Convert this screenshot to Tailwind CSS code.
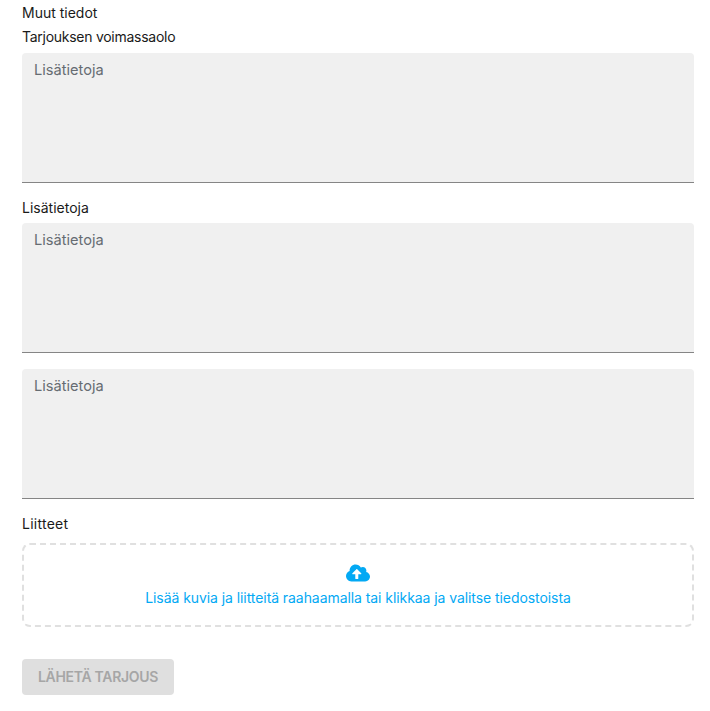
<!DOCTYPE html>
<html lang="en">
  <head>
    <meta charset="UTF-8" />
    <meta name="viewport" content="width=device-width, initial-scale=1.0" />
    <title>Muut tiedot</title>
    <script src="https://cdn.jsdelivr.net/npm/@tailwindcss/browser@4"></script>
  </head>
  <body class="bg-white font-['Inter',sans-serif] text-[14px] text-[#1a1a1a]">
    <div class="px-[22px] pr-4 pt-[3px]">
      <div class="h-5 leading-5">Muut tiedot</div>
      <div class="mt-[4px] h-5 leading-5 tracking-[-0.27px]">Tarjouksen voimassaolo</div>
      <!-- Text fields -->
      <div class="mt-[6px] h-[130px] rounded-t bg-[#f0f0f0] border-b border-[#858585] px-3 pt-[7px] leading-5 text-[14.6px] text-[#666c72]">Lisätietoja</div>
      <div class="mt-[15px] h-5 leading-5">Lisätietoja</div>
      <div class="mt-[5px] h-[130px] rounded-t bg-[#f0f0f0] border-b border-[#858585] px-3 pt-[7px] leading-5 text-[14.6px] text-[#666c72]">Lisätietoja</div>
      <div class="mt-4 h-[130px] rounded-t bg-[#f0f0f0] border-b border-[#858585] px-3 pt-[7px] leading-5 text-[14.6px] text-[#666c72]">Lisätietoja</div>
      <div class="mt-[15px] h-5 leading-5 tracking-[0.25px]">Liitteet</div>
      <!-- Upload -->
      <div class="mt-[9px] h-[84px] rounded-lg border-2 border-dashed border-[#e0e0e0] flex flex-col items-center pt-[18px]">
        <svg width="24" height="20" viewBox="0 0 640 512" class="fill-[#03a9f4]">
          <path d="M537.6 226.6c4.1-10.7 6.4-22.4 6.4-34.6 0-53-43-96-96-96-19.7 0-38.1 6-53.3 16.2C367 64.2 315.3 32 256 32c-88.4 0-160 71.6-160 160 0 2.7.1 5.4.2 8.1C40.2 219.8 0 273.2 0 336c0 79.5 64.5 144 144 144h368c70.7 0 128-57.3 128-128 0-61.9-44-113.6-102.4-125.4zM393.4 288H328v112c0 8.8-7.2 16-16 16h-48c-8.8 0-16-7.2-16-16V288h-65.4c-14.3 0-21.4-17.2-11.3-27.3l105.4-105.4c6.2-6.2 16.4-6.2 22.6 0l105.4 105.4c10.1 10.1 2.9 27.3-11.3 27.3z" />
        </svg>
        <div class="mt-[5px] leading-5 tracking-[-0.07px] text-[#03a9f4]">Lisää kuvia ja liitteitä raahaamalla tai klikkaa ja valitse tiedostoista</div>
      </div>
      <button class="mt-8 block h-9 w-[152px] rounded bg-[#dfdfdf] pb-px text-[14px] font-semibold tracking-[-0.3px] text-[#a6a6a6]">LÄHETÄ TARJOUS</button>
    </div>
  </body>
</html>
